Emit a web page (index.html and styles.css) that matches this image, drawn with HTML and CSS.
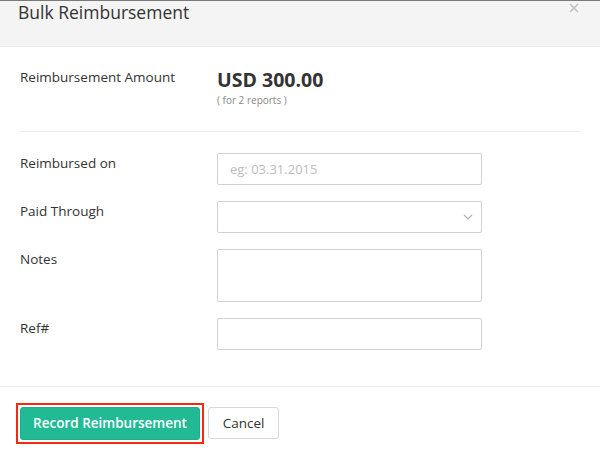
FILE: index.html
```html
<!DOCTYPE html>
<html>
<head>
<meta charset="utf-8">
<link rel="stylesheet" href="styles.css">
</head>
<body>
<div class="modal">
  <div class="header">
    <h1 class="title">Bulk Reimbursement</h1>
    <span class="close"><svg width="10" height="10" viewBox="0 0 10 10"><path d="M1 1L9 9M9 1L1 9" stroke="#bdbdbd" stroke-width="1.4" fill="none"/></svg></span>
  </div>
  <div class="body">
    <div class="amount-row">
      <div class="label">Reimbursement Amount</div>
      <div class="amount">
        <div class="value">USD 300.00</div>
        <div class="sub">( for 2 reports )</div>
      </div>
    </div>
    <div class="divider"></div>
    <div class="form">
      <div class="row">
        <div class="label field-label">Reimbursed on</div>
        <input class="input" type="text" placeholder="eg: 03.31.2015">
      </div>
      <div class="row">
        <div class="label field-label">Paid Through</div>
        <div class="input select"><svg width="10" height="6" viewBox="0 0 10 6"><path d="M1 1L5 5L9 1" stroke="#b0b0b0" stroke-width="1.2" fill="none"/></svg></div>
      </div>
      <div class="row">
        <div class="label field-label">Notes</div>
        <textarea class="input textarea"></textarea>
      </div>
      <div class="row">
        <div class="label field-label">Ref#</div>
        <input class="input" type="text">
      </div>
    </div>
  </div>
  <div class="footer">
    <span class="focus-ring"><button class="btn btn-primary">Record Reimbursement</button></span>
    <button class="btn btn-default">Cancel</button>
  </div>
</div>
</body>
</html>
```

FILE: styles.css
```css
html, body {
  margin: 0;
  padding: 0;
  background: #ffffff;
}
body {
  font-family: "Open Sans", "Liberation Sans", sans-serif;
  color: #333333;
  width: 600px;
  height: 460px;
  overflow: hidden;
}
.modal {
  width: 600px;
}
.header {
  height: 45px;
  background: #f4f4f4;
  border-top: 1px solid #7a7a7a;
  border-bottom: 1px solid #e9e9e9;
  display: flex;
  justify-content: space-between;
  align-items: flex-start;
  padding: 0 21px 0 18px;
}
.title {
  margin: 0;
  font-size: 17.5px;
  font-weight: 400;
  line-height: 23px;
  color: #333333;
}
.close {
  display: block;
  margin-top: 2px;
  line-height: 0;
}
.body {
  padding: 21px 20px 0 20px;
}
.amount-row {
  display: flex;
}
.label {
  width: 197px;
  flex: none;
  font-size: 13.5px;
  line-height: 18px;
  color: #333333;
}
.value {
  font-size: 19.5px;
  font-weight: 700;
  line-height: 24px;
  color: #333333;
}
.sub {
  margin-top: 2px;
  font-size: 10px;
  line-height: 13px;
  color: #888888;
}
.divider {
  margin-top: 24px;
  height: 1px;
  background: #ececec;
}
.form {
  padding: 21px 0 36px 0;
  display: flex;
  flex-direction: column;
  gap: 16px;
}
.row {
  display: flex;
  align-items: flex-start;
}
.field-label {
  padding-top: 1px;
}
.input {
  box-sizing: border-box;
  width: 265px;
  height: 32px;
  margin: 0;
  padding: 0 12px;
  border: 1px solid #d0d0d0;
  border-radius: 2px;
  background: #ffffff;
  font-family: "Open Sans", "Liberation Sans", sans-serif;
  font-size: 13px;
  color: #333333;
  outline: none;
}
.input::placeholder {
  color: #bdbdbd;
}
.select {
  display: flex;
  align-items: center;
  justify-content: flex-end;
  padding-right: 8px;
}
.textarea {
  height: 53px;
  resize: none;
  padding: 6px 12px;
}
.footer {
  border-top: 1px solid #ececec;
  padding: 16px 16px 0 16px;
  display: flex;
  gap: 4px;
  align-items: flex-start;
}
.focus-ring {
  display: block;
  border: 2px solid #f42a0f;
  padding: 2px;
  line-height: 0;
}
.btn {
  box-sizing: border-box;
  height: 33px;
  margin: 0;
  border-radius: 3px;
  font-family: "Open Sans", "Liberation Sans", sans-serif;
  font-size: 13.5px;
  line-height: 31px;
  padding: 0 12px;
  cursor: pointer;
}
.btn-primary {
  width: 180px;
  background: #21ba95;
  border: 1px solid #1eb08c;
  color: #ffffff;
  font-weight: 600;
  outline: none;
}
.btn-default {
  width: 71px;
  height: 32px;
  margin-top: 4px;
  background: #ffffff;
  border: 1px solid #d8d8d8;
  color: #333333;
  line-height: 30px;
}
```
